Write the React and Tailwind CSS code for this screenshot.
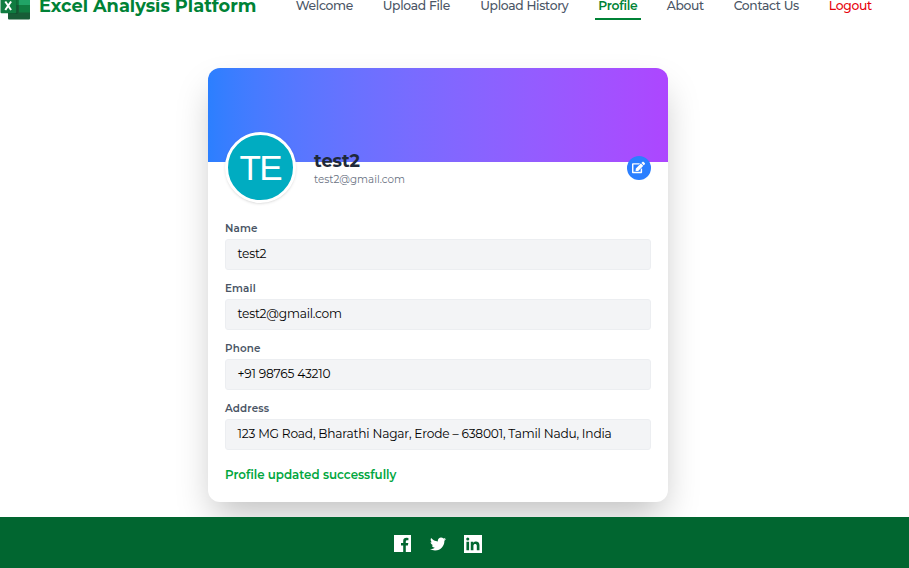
import React from "react";
import { FaTwitter, FaEdit } from "react-icons/fa";

const links = [
  { label: "Welcome", cls: "w-[64px]" },
  { label: "Upload File", cls: "w-[75px]" },
  { label: "Upload History", cls: "w-[96px]" },
  { label: "Profile", cls: "w-[46px]", active: true },
  { label: "About", cls: "w-[44px]" },
  { label: "Contact Us", cls: "w-[73px]" },
  { label: "Logout", cls: "w-[50px]", danger: true },
];

const fields = [
  { label: "Name", value: "test2" },
  { label: "Email", value: "test2@gmail.com" },
  { label: "Phone", value: "+91 98765 43210" },
  {
    label: "Address",
    value: "123 MG Road, Bharathi Nagar, Erode – 638001, Tamil Nadu, India",
  },
];

function ExcelLogo() {
  return (
    <svg className="-mt-[9px] h-[29px] w-[30px] shrink-0" viewBox="0 0 30 29">
      <path d="M8 1h11v13H8z" fill="#107c41" />
      <path d="M19 1h11v13H19z" fill="#21a366" />
      <path d="M8 14h11v8H8z" fill="#185c37" />
      <path d="M19 14h11v8H19z" fill="#107c41" />
      <path d="M8 21.500h22v6a1 1 0 0 1-1 1H9a1 1 0 0 1-1-1z" fill="#185c37" />
      <path d="M8 9h9.500v14H8z" fill="#0b3d25" opacity=".4" />
      <rect x="0.500" y="6" width="15.800" height="16.300" rx="1" fill="#107c41" />
      <path d="M5.300 10.500l5.800 8.500M11.100 10.500l-5.800 8.500" stroke="#fff" strokeWidth="2" />
    </svg>
  );
}

function Header() {
  return (
    <header className="flex h-5 items-start">
      <ExcelLogo />
      <h1 className="ml-[9px] w-[253.3px] text-[17.75px] leading-[11px] font-bold whitespace-nowrap text-[#008236]">
        Excel Analysis Platform
      </h1>
      <nav className="flex gap-[22.5px] text-[12.3px] font-medium tracking-[-0.3px] text-[#4a5565]">
        {links.map((l) => (
          <a
            key={l.label}
            className={
              "flex h-5 shrink-0 justify-center leading-[11px] whitespace-nowrap " +
              l.cls +
              (l.active ? " border-b-2 border-[#008236] font-semibold text-[#008236]" : "") +
              (l.danger ? " text-[#e7000b]" : "")
            }
          >
            {l.label}
          </a>
        ))}
      </nav>
    </header>
  );
}

function ProfileCard() {
  return (
    <section className="h-[434px] w-[460.5px] overflow-hidden rounded-[12px] bg-white shadow-[0_18px_36px_-6px_rgba(0,0,0,0.25)]">
      <div className="h-[94px] bg-linear-to-r from-[#2b7fff] to-[#ad46ff]" />
      <div className="relative -mt-[30px] flex h-[72px] items-start px-[17.5px]">
        <div className="flex size-[71px] shrink-0 items-center justify-center rounded-full border-[3px] border-white bg-[#00acc1] pt-[2px] font-['Liberation_Sans',Arial,sans-serif] text-[35px] tracking-[-1.5px] text-white shadow-sm">
          <span className="-ml-[0.5px]">TE</span>
        </div>
        <div className="ml-[18px] flex-1 pt-[18px]">
          <h2 className="text-[17.7px] leading-[22px] font-bold text-[#1e2939]">test2</h2>
          <p className="text-[10.35px] leading-[16px] text-[#6a7282]">test2@gmail.com</p>
        </div>
        <button className="mt-[24px] flex size-[23.500px] items-center justify-center rounded-full bg-[#2b7fff] text-white">
          <FaEdit className="size-[13px]" />
        </button>
      </div>
      <div className="flex flex-col gap-[11px] px-[17.5px] pt-[17px]">
        {fields.map((f) => (
          <div key={f.label} className="h-[49px]">
            <div className="h-[18px] text-[10.35px] leading-[16px] font-semibold tracking-[0.15px] text-[#4a5565]">
              {f.label}
            </div>
            <div className="h-[30.500px] rounded-[3px] border border-[#eceef1] bg-[#f3f4f6] px-[11.500px] text-[12.2px] leading-[28.500px] tracking-[-0.19px] whitespace-nowrap text-black">
              {f.value}
            </div>
          </div>
        ))}
      </div>
      <p className="mt-[16px] px-[17.5px] text-[11.85px] leading-[18px] font-semibold text-[#00a63e]">
        Profile updated successfully
      </p>
    </section>
  );
}

export default function App() {
  return (
    <div className="flex h-[568px] w-[909px] flex-col overflow-hidden bg-white font-[Montserrat,Inter,sans-serif]">
      <Header />
      <main className="h-[497px] pt-12 pl-[207.5px]">
        <ProfileCard />
      </main>
      <footer className="relative flex h-[51px] items-center gap-[18.5px] bg-[#016630] pt-[2px] pl-[394px] text-white">
        <svg className="size-[17px]" viewBox="0 0 17 17" fill="currentColor">
          <path d="M0 0h17v17h-5.200v-6.400h2.100l.4-2.600h-2.500V6.500q0-1.300 1.300-1.300h1.300V2.900q-5.200-1-5.200 3.100v2H7v2.600h2.200V17H0z" />
        </svg>
        <FaTwitter className="size-[16px]" />
        <svg className="size-[18px]" viewBox="0 0 17 17">
          <path fill="currentColor" d="M0 0h17v17H0z" />
          <path
            fill="#016630"
            d="M2.300 6.400h2.500v8H2.300zM6.400 6.400h2.400v1.100c1.200-2 5.800-2 5.800 2v4.900h-2.500V10.200c0-2.300-3.200-2.100-3.200 0v4.200H6.400z"
          />
          <circle fill="#016630" cx="3.550" cy="3.800" r="1.450" />
        </svg>
      </footer>
    </div>
  );
}
